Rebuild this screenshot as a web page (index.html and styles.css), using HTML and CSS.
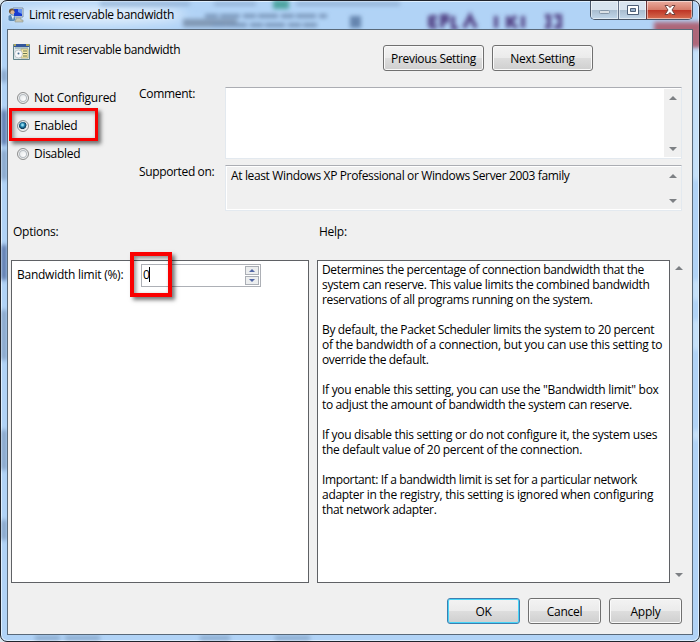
FILE: index.html
```html
<!DOCTYPE html>
<html lang="en">
<head>
<meta charset="utf-8">
<title>Limit reservable bandwidth</title>
<link rel="stylesheet" href="styles.css">
</head>
<body>
<div class="window">
  <svg class="glass" width="698" height="640" viewBox="1 1 698 640" aria-hidden="true">
    <defs><filter id="blur" filterUnits="userSpaceOnUse" x="0" y="0" width="700" height="642"><feGaussianBlur stdDeviation="2"/></filter>
    <filter id="haze" x="-50%" y="-100%" width="200%" height="300%"><feGaussianBlur stdDeviation="6"/></filter></defs>
    <ellipse cx="95" cy="15" rx="90" ry="9" fill="#e2effc" filter="url(#haze)"/>
    <g filter="url(#blur)">
      <path d="M100 4h90M214 4h42M296 4h104" stroke="#8ba9cc" stroke-width="3"/>
      <rect x="273" y="0" width="16" height="9" fill="#50a5a2"/>
      <path d="M183 23h54" stroke="#8199b5" stroke-width="8"/>
      <path d="M205 16h122M212 25h105" stroke="#7894b8" stroke-width="4" stroke-dasharray="13 2 20 3"/>
      <path d="M350 22h11" stroke="#6585ae" stroke-width="12"/>
      <path d="M430 16v11M430 17h7m-7 5h6m-6 5h7M442 28V16h5v5h-5M453 16v12h5M464 28l6-12 6 12M496 16v12M508 16v12m8-12l-6 6 7 6M523 16v12M545 16h4v11h-4M554 16h6v11h-6" stroke="#574a8a" stroke-width="4" fill="none"/>
      <path d="M654 22h48v26h-48z" fill="#ad6679"/>
      <path d="M4 110v35M4 245v35" stroke="#405a92" stroke-width="4"/>
      <path d="M4 150v30M4 70v12M4 310v50M4 430v40M4 520v20" stroke="#7995b9" stroke-width="4"/>
      <path d="M696 50v130M696 280v20M696 320v30M696 430v10" stroke="#d4e9fa" stroke-width="4"/>
      <path d="M35 638h25M65 638h35M200 638h30M275 638h35" stroke="#7896b9" stroke-width="3"/>
    </g>
  </svg>
  <header class="titlebar">
    <svg class="title-icon" width="16" height="16" viewBox="0 0 16 16" aria-hidden="true">
      <path d="M5 1h10v9H5z" fill="#dce6ed" stroke="#7d91a7"/><path d="M6 2h8v7H6z" fill="#173bd0"/><path d="M10 2h4v5l-4-2z" fill="#6794ef"/>
      <path d="M8 11h5v2h2v2H7v-2h1z" fill="#c9c8b5" stroke="#8c948f" stroke-width=".6"/>
      <circle cx="3.7" cy="4.2" r="2.7" fill="#725537"/><circle cx="4.5" cy="5.2" r="2" fill="#d8b493"/><path d="M.5 13V9l3-2 3 2 1 4-2 1H2z" fill="#5687b5"/><path d="M3 8l2 5 1-4z" fill="#e6eef5"/>
    </svg>
    <span class="title">Limit reservable bandwidth</span>
    <div class="caption-buttons">
      <span class="cap cap-min"><svg width="14" height="12"><rect x="1.5" y="6.500" width="10" height="3" rx="1" fill="#dbe1e6" stroke="#8596a8"/></svg></span>
      <span class="cap cap-max"><svg width="14" height="12"><path d="M1.5 1.5h11v9h-11z" fill="#fff" stroke="#4d5f77"/><path d="M4.5 4.5h5v3h-5z" fill="#9ab1cb" stroke="#4d5f77"/></svg></span>
      <span class="cap cap-close"><svg width="14" height="12"><path d="M2 1.5h3l2 2 2-2h3L9 6l3 4.5H9l-2-2-2 2H2L5 6z" fill="#fff" stroke="#71433f"/></svg></span>
    </div>
  </header>

  <main class="client">
    <div class="policy-head">
      <svg class="policy-icon" width="17" height="17" viewBox="0 0 17 17" aria-hidden="true">
        <path d="M.5 1.5h16v15H.5z" fill="#dce7ea" stroke="#62848b"/><path d="M1 1h15v3H1z" fill="#33569a"/><path d="M2 5h13" stroke="#789aa2"/><path d="M1 1h2v2H1zM13 1h3v2h-3z" fill="#a9a55f"/>
        <path d="M8 6h7v9H8z" fill="#f8edaa" stroke="#aaa56c" stroke-width=".7"/><path d="M10 8h4M10 10.500h4M10 13h4" stroke="#6c7954"/>
        <circle cx="5.500" cy="11" r="4" fill="#f7f8fa" stroke="#9da8b0" stroke-width=".6"/><circle cx="5.500" cy="10.500" r="1" fill="#466a8e"/>
      </svg>
      <span class="policy-name">Limit reservable bandwidth</span>
      <div class="nav-buttons"><button class="btn wide">Previous Setting</button><button class="btn wide">Next Setting</button></div>
    </div>

    <section class="config">
      <div class="states">
        <label class="state"><i class="radio"></i><span>Not Configured</span></label>
        <label class="state"><i class="radio on"></i><span>Enabled</span><b class="mark mark-enabled"></b></label>
        <label class="state"><i class="radio"></i><span class="snug">Disabled</span></label>
      </div>
      <div class="field-labels"><span class="snug">Comment:</span><span class="tight">Supported on:</span></div>
      <div class="fields">
        <div class="field comment"><div class="field-text"></div><div class="scroll"><i class="up"></i><i class="down"></i></div></div>
        <div class="field supported"><div class="field-text"><span class="tight">At least Windows XP Professional or Windows Server 2003 family</span></div><div class="scroll"><i class="up"></i><i class="down"></i></div></div>
      </div>
    </section>

    <section class="details">
      <div class="options">
        <h2>Options:</h2>
        <div class="panel options-panel">
          <span class="limit-label">Bandwidth limit (%):</span>
          <div class="spinner"><span class="value">0</span><i class="caret"></i><div class="steps"><span><i class="up"></i></span><span><i class="down"></i></span></div><b class="mark mark-value"></b></div>
        </div>
      </div>
      <div class="help">
        <h2>Help:</h2>
        <div class="help-body">
          <div class="panel help-panel">
            <p><span class="tight">Determines the percentage of connection bandwidth that the</span><br><span class="close">system can reserve. This value limits the combined bandwidth</span><br><span class="tight">reservations of all programs running on the system.</span></p>
            <p><span class="tight">By default, the Packet Scheduler limits the system to 20 percent</span><br><span class="snug">of the bandwidth of a connection, but you can use this setting to</span><br><span class="tight">override the default.</span></p>
            <p><span class="snug">If you enable this setting, you can use the "Bandwidth limit" box</span><br><span class="tight">to adjust the amount of bandwidth the system can reserve.</span></p>
            <p><span class="close">If you disable this setting or do not configure it, the system uses</span><br><span class="close">the default value of 20 percent of the connection.</span></p>
            <p><span class="tight">Important: If a bandwidth limit is set for a particular network</span><br><span class="snug">adapter in the registry, this setting is ignored when configuring</span><br><span class="tight">that network adapter.</span></p>
          </div>
          <div class="scroll help-scroll"><i class="up"></i><i class="down"></i></div>
        </div>
      </div>
    </section>

    <footer class="actions"><button class="btn ok">OK</button><button class="btn">Cancel</button><button class="btn">Apply</button></footer>
  </main>
</div>
</body>
</html>
```
FILE: styles.css
```css
* { box-sizing: border-box; }
body { margin: 0; background: #dce7ee; color: #000; font: 12px/15px "Open Sans", "Noto Sans", sans-serif; letter-spacing: -.25px; }
span { white-space: nowrap; }
.snug { letter-spacing: -.29px; }
.close { letter-spacing: -.31px; }
.tight { letter-spacing: -.36px; }
.window { position: relative; width: 700px; height: 642px; overflow: hidden; border: 1px solid #20242c; border-radius: 7px; background: #b1d3f6; box-shadow: inset 0 0 0 1px #deefff; padding: 0 6px 6px; display: flex; flex-direction: column; }
.glass { position: absolute; left: 0; top: 0; }
.titlebar { position: relative; height: 28px; display: flex; align-items: flex-start; padding-left: 1px; }
.title-icon { margin-top: 6px; }
.title { margin: 6px 0 0 5px; letter-spacing: -.3px; }
.caption-buttons { display: flex; height: 19px; width: 103px; margin: 0 0 0 auto; border: 1px solid #475567; border-top: 0; border-radius: 0 0 5px 5px; overflow: hidden; }
.cap { display: flex; align-items: center; justify-content: center; width: 27px; box-shadow: inset 0 0 0 1px #ffffff80; background: linear-gradient(#d8e4ef 0 48%, #a8bccf 50%, #c2d7ea); }
.cap-max { width: 28px; border-left: 1px solid #637187; }
.cap-close { flex: 1; border-left: 1px solid #6b3438; background: linear-gradient(#e8a799 0 5%, #d67c6a 48%, #be3324 50%, #d66e51); }
.client { position: relative; flex: 1; border: 1px solid #596979; background: #f0f0f0; display: flex; flex-direction: column; }
.policy-head { height: 57px; display: flex; padding: 12px 0 0 5px; }
.policy-icon { margin-top: 1px; }
.policy-name { margin: 0 0 0 8px; width: 345px; letter-spacing: -.41px; }
.nav-buttons { display: flex; gap: 8px; margin-top: 3px; }
.btn { width: 73px; height: 26px; padding: 0; border: 1px solid #707070; border-radius: 3px; box-shadow: inset 0 0 0 1px #fafafa; background: linear-gradient(#f3f3f3, #ebebeb 48%, #dddddd 52%, #cfcfcf); color: #000; font: inherit; letter-spacing: -.25px; }
.wide { width: 101px; letter-spacing: -.33px; }
.ok { border-color: #3c7fb1; box-shadow: inset 0 0 0 1px #48d5f8; }
.config { height: 138px; display: flex; }
.states { width: 131px; padding: 3px 0 0 9px; }
.state { position: relative; height: 28px; display: flex; align-items: flex-start; gap: 5px; }
.radio { width: 12px; height: 12px; margin-top: 2px; border: 1px solid #8e8f8f; border-radius: 50%; background: radial-gradient(circle at 70% 70%, #fff, #d8dcdf); box-shadow: inset 0 0 0 1px #f4f4f4, inset 0 0 0 2px #b5bbc0; }
.radio.on { background: radial-gradient(circle at 45% 40%, #90dcf0 0 10%, #2181ab 25%, #0b3654 46%, #dce3e6 52%); box-shadow: inset 0 0 0 1px #f4f4f4; }
.field-labels { display: flex; flex-direction: column; width: 86px; gap: 63px; margin-top: -1px; }
.fields { width: 457px; }
.field { display: flex; border: 1px solid #e3e9ef; border-top-color: #abadb3; padding: 1px 0 1px 1px; }
.comment { height: 72px; background: #fff; }
.supported { height: 46px; margin-top: 6px; box-shadow: inset 0 0 0 1px #fff; }
.field-text { flex: 1; padding: 1px 4px; }
.scroll { width: 17px; background: #f0f0f0; display: flex; flex-direction: column; align-items: center; justify-content: space-between; padding: 7px 0 6px; }
.up, .down { width: 0; height: 0; border: 4px solid transparent; border-top: 0; border-bottom: 4px solid #7d8084; }
.down { border-bottom: 0; border-top: 4px solid #7d8084; }
.details { display: flex; gap: 8px; height: 358px; padding-left: 3px; }
h2 { margin: -1px 0 0; height: 36px; font: inherit; padding: 0 0 0 2px; }
.options { width: 298px; }
.panel { height: 323px; border: 1px solid #5f6165; background: #fff; }
.options-panel { display: flex; align-items: flex-start; padding: 3px 0 0 5px; }
.limit-label { width: 124px; padding-top: 3px; }
.spinner { position: relative; width: 120px; height: 23px; border: 1px solid #adb0b6; display: flex; padding: 1px; }
.value { line-height: 17px; letter-spacing: -.6px; }
.caret { width: 1px; height: 15px; background: #000; margin-top: 1px; }
.steps { margin-left: auto; width: 14px; }
.steps span { height: 9px; width: 14px; border: 1px solid #aaaeb5; background: #eceeef; display: flex; align-items: center; justify-content: center; }
.steps span + span { margin-top: 1px; }
.steps i { border-left-width: 3px; border-right-width: 3px; border-bottom-width: 3px; border-bottom-color: #5267a5; }
.steps .down { border-bottom-width: 0; border-top: 3px solid #5267a5; }
.help-body { display: flex; }
.help-panel { width: 353px; padding: 1px 0 0 4px; }
.help-panel p { margin: 0 0 15px; }
.help-scroll { height: 323px; padding: 6px 0 6px; }
.mark { position: absolute; border: 3px solid #fa0000; box-shadow: 3px 3px 4px #00000088, inset 2px 2px 4px #00000070; }
.mark-enabled { left: -8px; top: -10px; width: 89px; height: 33px; }
.mark-value { left: -12px; top: -13px; width: 42px; height: 45px; border-width: 4px; }
.actions { display: flex; justify-content: flex-end; gap: 8px; padding: 15px 10px 0 0; }
```
